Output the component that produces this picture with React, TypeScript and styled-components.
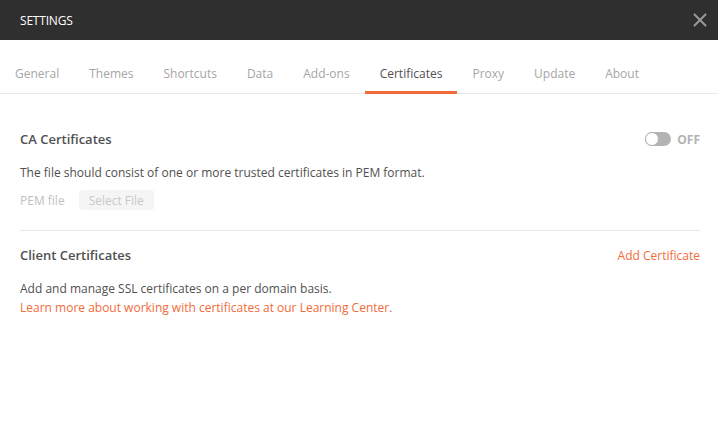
import styled, {createGlobalStyle} from 'styled-components'

const GlobalStyle = createGlobalStyle`
    html, body {
        margin: 0;
        padding: 0;
        background: #ffffff;
    }
    body {
        font-family: 'Open Sans', 'Liberation Sans', sans-serif;
        -webkit-font-smoothing: antialiased;
    }
`

const tabs = ['General', 'Themes', 'Shortcuts', 'Data', 'Add-ons', 'Certificates', 'Proxy', 'Update', 'About']

export default function App() {
    return (
        <Container>
            <GlobalStyle />
            <Header>
                <HeaderTitle>SETTINGS</HeaderTitle>
                <CloseButton aria-label="close">
                    <svg width="14" height="14" viewBox="0 0 14 14">
                        <path d="M1 1L13 13M13 1L1 13" stroke="#9a9a9a" strokeWidth="2" fill="none" />
                    </svg>
                </CloseButton>
            </Header>
            <TabBar>
                {tabs.map((tab) => (
                    <Tab key={tab} $active={tab === 'Certificates'}>
                        {tab}
                    </Tab>
                ))}
            </TabBar>
            <Content>
                <Section>
                    <SectionHead>
                        <SectionTitle>CA Certificates</SectionTitle>
                        <ToggleWrap>
                            <Toggle>
                                <Knob />
                            </Toggle>
                            <ToggleLabel>OFF</ToggleLabel>
                        </ToggleWrap>
                    </SectionHead>
                    <Text>The file should consist of one or more trusted certificates in PEM format.</Text>
                    <FileRow>
                        <FileLabel>PEM file</FileLabel>
                        <SelectButton disabled>Select File</SelectButton>
                    </FileRow>
                </Section>
                <Divider />
                <Section>
                    <SectionHead>
                        <SectionTitle>Client Certificates</SectionTitle>
                        <Link>Add Certificate</Link>
                    </SectionHead>
                    <Text>
                        Add and manage SSL certificates on a per domain basis.
                        <br />
                        <Link>Learn more about working with certificates at our Learning Center.</Link>
                    </Text>
                </Section>
            </Content>
        </Container>
    )
}

const Container = styled.div`
    width: 718px;
    height: 429px;
    background: #ffffff;
    display: flex;
    flex-direction: column;
`

const Header = styled.header`
    height: 40px;
    background: #2f2f2f;
    display: flex;
    align-items: center;
    justify-content: space-between;
    padding: 0 11px 0 20px;
`

const HeaderTitle = styled.h1`
    margin: 0;
    font-size: 12px;
    font-weight: 400;
    color: #ffffff;
    letter-spacing: -0.2px;
`

const CloseButton = styled.button`
    border: none;
    background: none;
    padding: 0;
    width: 14px;
    height: 14px;
    display: flex;
    cursor: pointer;
`

const TabBar = styled.nav`
    display: flex;
    height: 53px;
    align-items: stretch;
    border-bottom: 1px solid #e8e8e8;
`

const Tab = styled.div<{$active?: boolean}>`
    padding: 25px 15px 0;
    font-size: 12px;
    color: ${({$active}) => ($active ? '#505050' : '#a6a6a6')};
    border-bottom: 3px solid ${({$active}) => ($active ? '#f26b3a' : 'transparent')};
    box-sizing: border-box;
    height: 54px;
    margin-bottom: -1px;
`

const Content = styled.main`
    padding: 33px 18px 0 20px;
    display: flex;
    flex-direction: column;
`

const Section = styled.section`
    display: flex;
    flex-direction: column;
`

const SectionHead = styled.div`
    display: flex;
    justify-content: space-between;
    align-items: center;
    height: 24px;
    margin-bottom: 12px;
`

const SectionTitle = styled.h2`
    margin: 0;
    font-size: 13px;
    font-weight: 600;
    color: #505050;
`

const ToggleWrap = styled.div`
    display: flex;
    align-items: center;
    gap: 6px;
`

const Toggle = styled.div`
    width: 26px;
    height: 14px;
    border-radius: 7px;
    background: #b3b3b3;
    position: relative;
`

const Knob = styled.span`
    position: absolute;
    left: 0;
    top: 0;
    width: 14px;
    height: 14px;
    box-sizing: border-box;
    border-radius: 50%;
    background: #ffffff;
    border: 1px solid #b3b3b3;
`

const ToggleLabel = styled.span`
    font-size: 12px;
    font-weight: 700;
    color: #b3b3b3;
`

const Text = styled.p`
    margin: 0;
    font-size: 12px;
    line-height: 19px;
    color: #505050;
`

const FileRow = styled.div`
    display: flex;
    align-items: center;
    gap: 14px;
    margin-top: 8px;
`

const FileLabel = styled.span`
    font-size: 12px;
    color: #c0c0c0;
`

const SelectButton = styled.button`
    border: none;
    background: #f5f5f5;
    color: #c8c8c8;
    font-family: inherit;
    font-size: 12px;
    height: 20px;
    padding: 0 10px;
    border-radius: 3px;
`

const Divider = styled.hr`
    border: none;
    border-top: 1px solid #e8e8e8;
    margin: 20px 0 12px;
    width: 100%;
`

const Link = styled.span`
    color: #f26b3a;
    font-size: 12px;
    cursor: pointer;
`
